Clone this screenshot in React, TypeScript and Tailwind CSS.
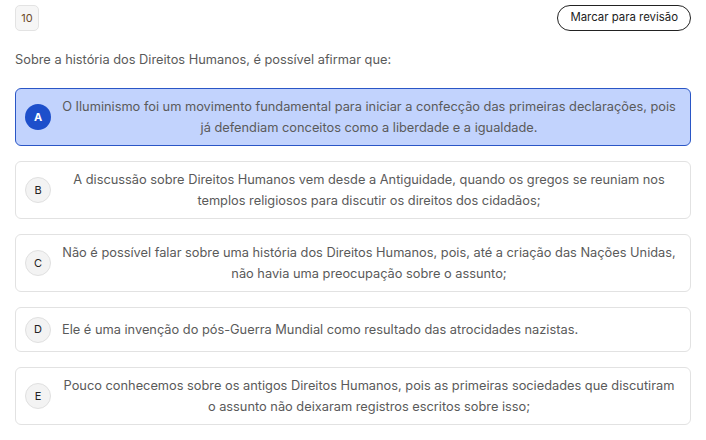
import React from "react";

const options = [
  { l: "A", t: "O Iluminismo foi um movimento fundamental para iniciar a confecção das primeiras declarações, pois já defendiam conceitos como a liberdade e a igualdade.", sel: true },
  { l: "B", t: "A discussão sobre Direitos Humanos vem desde a Antiguidade, quando os gregos se reuniam nos templos religiosos para discutir os direitos dos cidadãos;" },
  { l: "C", t: "Não é possível falar sobre uma história dos Direitos Humanos, pois, até a criação das Nações Unidas, não havia uma preocupação sobre o assunto;" },
  { l: "D", t: "Ele é uma invenção do pós-Guerra Mundial como resultado das atrocidades nazistas." },
  { l: "E", t: "Pouco conhecemos sobre os antigos Direitos Humanos, pois as primeiras sociedades que discutiram o assunto não deixaram registros escritos sobre isso;" },
];

export default function App() {
  return (
    <div className="w-[706px] h-[440px] bg-white px-[15px] pt-[5px] font-['Inter',sans-serif] overflow-hidden">
      <div className="flex items-center justify-between">
        <div className="w-[24px] h-[26px] rounded-[5px] border border-[#e3e3e3] bg-[#f6f6f6] flex items-center justify-center text-[11px] text-[#6b4a2a]">
          10
        </div>
        <div className="h-[26px] px-[12px] rounded-full border border-[#222] flex items-center text-[11.4px] text-[#222]">
          Marcar para revisão
        </div>
      </div>
      <p className="mt-[19px] text-[12.8px] leading-[20px] text-[#5a5a5a]">
        Sobre a história dos Direitos Humanos, é possível afirmar que:
      </p>
      <div className="mt-[18px] flex flex-col gap-[15px]">
        {options.map((o) => (
          <div
            key={o.l}
            className={
              "flex items-center gap-[11px] rounded-[6px] border pl-[9px] pr-[14px] py-[7px] min-h-[45px] " +
              (o.sel ? "bg-[#c2d3fd] border-[#2a56c6]" : "bg-white border-[#e2e2e2]")
            }
          >
            <div
              className={
                "shrink-0 w-[26px] h-[26px] rounded-full flex items-center justify-center text-[11px] " +
                (o.sel
                  ? "bg-[#1d4fcb] text-white font-bold"
                  : "bg-[#f3f3f3] border border-[#e0e0e0] text-[#222]")
              }
            >
              {o.l}
            </div>
            <p className="text-center text-[12.8px] leading-[21px] text-[#5a5a5a]">{o.t}</p>
          </div>
        ))}
      </div>
    </div>
  );
}
